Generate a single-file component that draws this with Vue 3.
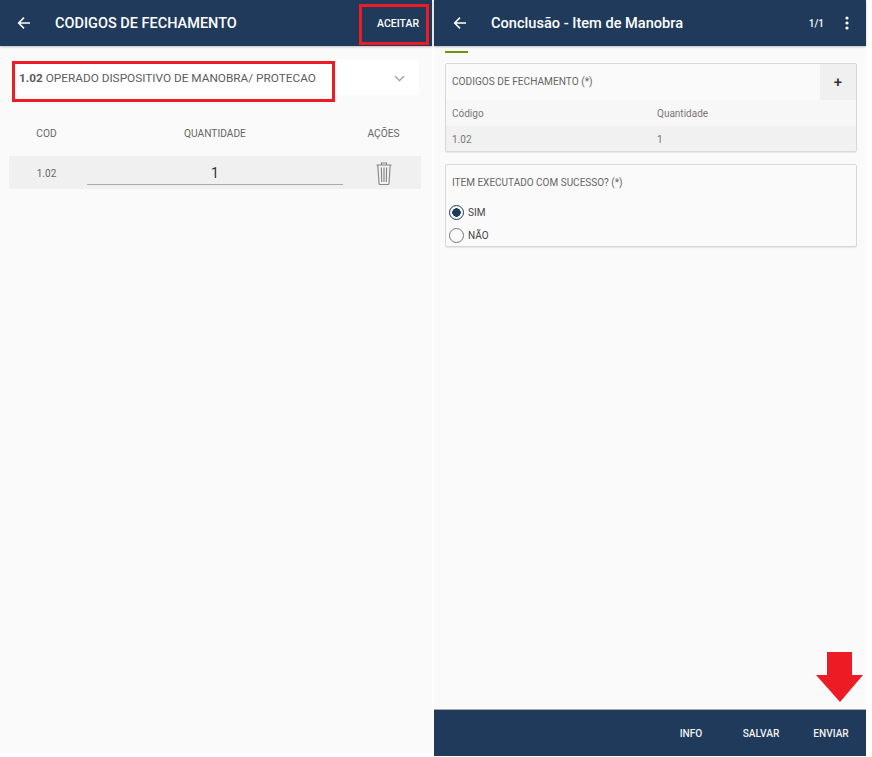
<script setup>
const title = 'CODIGOS DE FECHAMENTO'
</script>

<template>
  <div class="page">
    <section class="screen left">
      <header class="bar">
        <svg class="back" viewBox="0 0 14 14" width="14" height="14"><path d="M13 7H2M7 1.6 1.6 7 7 12.4" fill="none" stroke="#fff" stroke-width="1.5"/></svg>
        <h1 class="title">{{ title }}</h1>
        <span class="accept">ACEITAR</span>
      </header>
      <div class="highlight accept-box"></div>
      <div class="content-left">
        <div class="select">
          <span class="select-text"><b>1.02</b> OPERADO DISPOSITIVO DE MANOBRA/ PROTECAO</span>
          <svg class="chev" viewBox="0 0 12 8" width="11" height="7"><path d="M1 1.5 6 6.5 11 1.5" fill="none" stroke="#9a9a9a" stroke-width="1.5"/></svg>
        </div>
        <div class="highlight select-box"></div>
        <div class="t-head">
          <span class="c-cod">COD</span>
          <span class="c-qty">QUANTIDADE</span>
          <span class="c-act">AÇÕES</span>
        </div>
        <div class="t-row">
          <span class="c-cod">1.02</span>
          <span class="c-qty qty-input">1</span>
          <span class="c-act">
            <svg viewBox="0 0 16 23" width="16" height="23"><path d="M5.5 2.500V1h5v1.500M.5 3h15M1.800 3.200 3 21.500c0 .6.4 1 1 1h8c.6 0 1-.4 1-1l1.200-18.300M5.400 5.500l.3 14.500M8 5.500V20M10.600 5.500 10.300 20" fill="none" stroke="#858585" stroke-width="1.100"/></svg>
          </span>
        </div>
      </div>
    </section>

    <section class="screen right">
      <header class="bar bar-right">
        <svg class="back" viewBox="0 0 14 14" width="14" height="14"><path d="M13 7H2M7 1.6 1.6 7 7 12.4" fill="none" stroke="#fff" stroke-width="1.5"/></svg>
        <h1 class="title title-case">Conclusão - Item de Manobra</h1>
        <span class="pager">1/1</span>
        <svg class="dots" viewBox="0 0 4 14" width="4" height="14"><circle cx="2" cy="2" r="1.6" fill="#fff"/><circle cx="2" cy="7" r="1.6" fill="#fff"/><circle cx="2" cy="12" r="1.6" fill="#fff"/></svg>
      </header>
      <div class="content-right">
        <div class="progress"></div>
        <div class="card">
          <div class="card-head">
            <span class="card-label">CODIGOS DE FECHAMENTO (*)</span>
            <span class="plus">+</span>
          </div>
          <div class="grid-row grid-head"><span>Código</span><span>Quantidade</span></div>
          <div class="grid-row grid-body"><span>1.02</span><span>1</span></div>
        </div>
        <div class="card card-radio">
          <div class="card-label radio-label">ITEM EXECUTADO COM SUCESSO? (*)</div>
          <div class="radio"><span class="dot on"></span>SIM</div>
          <div class="radio"><span class="dot"></span>NÃO</div>
        </div>
      </div>
      <svg class="arrow" viewBox="0 0 47 50" width="47" height="50"><path d="M11 0H36V23H47L24 50 0 23H11Z" fill="#ed1c24"/></svg>
      <footer class="foot">
        <span class="act">INFO</span><span class="act">SALVAR</span><span class="act">ENVIAR</span>
      </footer>
    </section>
  </div>
</template>

<style>
html, body { margin: 0; background: #fff; }
</style>

<style scoped>
.page { display: flex; gap: 2px; width: 866px; height: 757px; font-family: Roboto, "Liberation Sans", sans-serif; }
.screen { position: relative; display: flex; flex-direction: column; width: 432px; background: #fafafa; }
.left { height: 753px; }
.right { height: 756px; }
.bar { flex: none; display: flex; align-items: center; height: 46px; background: #1f3a5a; color: #fff; box-shadow: 0 1px 2px rgba(0,0,0,.25); padding-left: 17px; box-sizing: border-box; }
.bar-right { padding-left: 19px; }
.back { flex: none; }
.title { margin: 0 0 0 24px; flex: 1; font-size: 14.500px; font-weight: 500; white-space: nowrap; }
.title-case { font-size: 14.600px; }
.accept { font-size: 10.500px; font-weight: 500; margin-right: 13px; }
.pager { font-size: 10px; font-weight: 500; margin-right: 21px; }
.dots { margin-right: 17px; }
.highlight { position: absolute; border: 3px solid #ed1c24; box-sizing: border-box; pointer-events: none; }
.accept-box { left: 359px; top: 4px; width: 70px; height: 41px; }
.select-box { left: 12px; top: 61px; width: 323px; height: 41px; }
.content-left { padding: 14px 11px 0 9px; }
.select { display: flex; align-items: center; justify-content: space-between; height: 35px; margin-left: 4px; margin-right: 2px; padding: 1px 14px 0 6px; box-sizing: border-box; background: #fff; }
.select-text { font-size: 11.800px; color: #5c5c5c; white-space: nowrap; }
.select-text b { font-weight: 700; }
.t-head, .t-row { display: flex; align-items: center; font-size: 10px; color: #666; text-align: center; }
.t-head { height: 34px; margin-top: 21px; font-size: 10.200px; }
.t-row { height: 33px; margin-top: 6px; padding-top: 1px; box-sizing: border-box; background: #f0f0f0; }
.c-cod { flex: none; width: 75px; }
.c-qty { flex: none; width: 256px; margin-left: 3px; }
.c-act { flex: none; width: 75px; display: flex; justify-content: center; margin-left: 3px; }
.qty-input { font-size: 14px; color: #333; border-bottom: 1px solid #aaa; line-height: 22px; }
.content-right { flex: 1; padding: 0 9px 0 11px; }
.progress { width: 23px; height: 2px; background: #6a9a00; margin-top: 5px; margin-bottom: 10px; }
.card { border: 1px solid #d8d8d8; border-radius: 2px; box-shadow: 0 1px 1px rgba(0,0,0,.08); margin-bottom: 12px; box-sizing: border-box; }
.card-head { display: flex; align-items: center; justify-content: space-between; height: 36px; padding-left: 6px; }
.card-head .card-label { font-size: 10.150px; margin-top: -2px; }
.card-label { font-size: 10px; color: #666; }
.plus { display: flex; align-items: center; justify-content: center; width: 36px; height: 36px; background: #f0f0f0; color: #333; font-size: 15px; font-weight: 500; }
.grid-row { display: grid; grid-template-columns: 205px 1fr; align-items: center; padding-left: 6px; font-size: 10px; color: #777; height: 26px; }
.grid-head { background: #f7f7f7; }
.grid-body { background: #f1f1f1; height: 25px; padding-top: 1px; box-sizing: border-box; }
.card-radio { height: 83px; }
.radio-label { padding: 12px 0 0 6px; height: 24px; line-height: 12px; }
.radio { display: flex; align-items: center; height: 23px; padding-left: 3px; font-size: 10px; color: #444; }
.dot { box-sizing: border-box; width: 15px; height: 15px; border: 1px solid #777; border-radius: 50%; margin-right: 4px; }
.dot.on { border: 1.500px solid #1f3a5a; background: radial-gradient(circle, #1f3a5a 4px, transparent 4.500px); }
.arrow { position: absolute; right: 3px; bottom: 54px; }
.foot { flex: none; display: flex; align-items: center; justify-content: flex-end; height: 47px; background: #1f3a5a; border-top: 1px solid #aaa; color: #f0f0f0; font-size: 10.150px; font-weight: 500; box-sizing: border-box; }
.act { width: 70px; text-align: center; }
</style>
